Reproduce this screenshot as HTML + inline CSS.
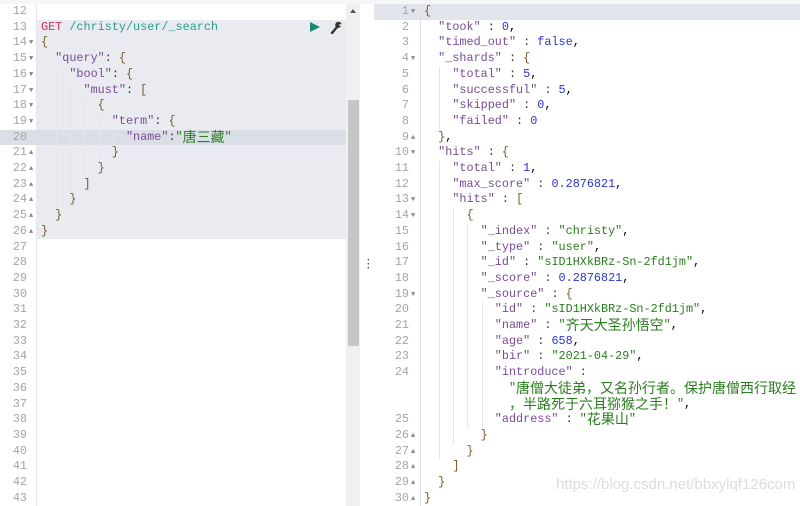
<!DOCTYPE html>
<html><head><meta charset="utf-8"><style>
body{margin:0;width:800px;height:506px;overflow:hidden;background:#fff;font-family:"Liberation Mono","Noto Sans CJK SC",monospace;font-size:11.8px;position:relative}
.top{position:absolute;left:0;top:0;width:800px;height:4px;background:#f5f6f8}
.l{position:absolute;height:15.7px;line-height:15.7px;white-space:pre;overflow:visible}
.n{position:absolute;height:15.7px;line-height:15.7px;text-align:right;color:#a4a4aa}
.a{font-size:7px;color:#888;position:absolute}
.k{color:#7a4a96}.s{color:#2a7d1e}.m{color:#2a36c8}.p{color:#333}.b{color:#7a5a2a}
.cj{font-family:"Noto Sans CJK SC",sans-serif;font-size:14px;line-height:10px;vertical-align:top;display:inline-block;height:15.7px;line-height:15.7px}
.g{position:absolute;width:1px;background:#e6e6e6}
</style></head><body>
<div class="top"></div>
<div style="position:absolute;left:36px;top:4px;width:1px;height:502px;background:#e4e6ea"></div>
<div style="position:absolute;left:37px;top:19.7px;width:309px;height:219.8px;background:#e9ebf1"></div>
<div style="position:absolute;left:0;top:129.6px;width:346px;height:15.7px;background:#dadee6"></div>
<div style="position:absolute;left:346px;top:4px;width:14px;height:502px;background:#f0f0f0"></div>
<div style="position:absolute;left:348px;top:100px;width:11px;height:246px;background:#c6c6c6"></div>
<div style="position:absolute;left:350px;top:9px;width:0;height:0;border-left:3.5px solid transparent;border-right:3.5px solid transparent;border-bottom:4px solid #555"></div>
<div style="position:absolute;left:310px;top:22px;width:0;height:0;border-top:5.5px solid transparent;border-bottom:5.5px solid transparent;border-left:10px solid #178a72"></div>
<svg style="position:absolute;left:330px;top:21px" width="13" height="13" viewBox="0 0 13 13"><path d="M2 12 L7 6" stroke="#333" stroke-width="2.4" stroke-linecap="round"/><path d="M6 6 A3.2 3.2 0 1 1 11.5 3 L9 3.5 L9 4.5 L11 5 A3.2 3.2 0 0 1 6 6Z" fill="#333"/></svg>
<div id="left"></div>
<div style="position:absolute;left:365px;top:259px;color:#555;font-size:11px;line-height:4px">·<br>·<br>·</div>
<div style="position:absolute;left:374px;top:4px;width:426px;height:15.7px;background:#e2e5ec"></div>
<div style="position:absolute;left:420px;top:4px;width:1px;height:502px;background:#e0e2e8"></div>
<div id="right"></div>
<div style="position:absolute;left:556px;top:476px;color:#dcdcdc;font-family:'Liberation Sans',sans-serif;font-size:15px">https://blog.csdn.net/bbxylqf126com</div>
<script>
const H=15.7,T=4,CW=7.08;
function row(el,i,num,arrow,html,nx,cx,nw){
 let y=T+i*H;
 let s='';
 if(num!==null) s+=`<div class="n" style="left:${nx}px;width:${nw}px;top:${y}px">${num}</div>`;
 if(arrow) s+=`<div class="a" style="left:${nx+nw+2}px;top:${y+4}px">${arrow}</div>`;
 s+=`<div class="l" style="left:${cx}px;top:${y}px">${html}</div>`;
 el.insertAdjacentHTML('beforeend',s);
}
function guide(el,cx,col,r0,r1){el.insertAdjacentHTML('afterbegin',`<div class="g" style="left:${Math.round(cx+col*CW)+1}px;top:${T+r0*H}px;height:${(r1-r0+1)*H}px"></div>`);}
const D='▼',U='▲';
const q=t=>`<span class="k">"${t}"</span>`;
const L=[
[12,'',''],
[13,'','<span style="color:#d0325e">GET</span> <span style="color:#2a9d8a">/christy/user/_search</span>'],
[14,D,'<span class="b">{</span>'],
[15,D,'  '+q('query')+'<span class="p">: </span><span class="b">{</span>'],
[16,D,'    '+q('bool')+'<span class="p">: </span><span class="b">{</span>'],
[17,D,'      '+q('must')+'<span class="p">: </span><span class="b">[</span>'],
[18,D,'        <span class="b">{</span>'],
[19,D,'          '+q('term')+'<span class="p">: </span><span class="b">{</span>'],
[20,'','            '+q('name')+'<span class="p">:</span><span class="s">"<span class="cj">唐三藏</span>"</span>'],
[21,U,'          <span class="b">}</span>'],
[22,U,'        <span class="b">}</span>'],
[23,U,'      <span class="b">]</span>'],
[24,U,'    <span class="b">}</span>'],
[25,U,'  <span class="b">}</span>'],
[26,U,'<span class="b">}</span>']];
const le=document.getElementById('left');
for(let i=0;i<32;i++){let r=L[i]||[12+i,'',''];row(le,i,r[0],r[1],r[2],0,41,27);}
guide(le,41,2,4,12);guide(le,41,4,5,11);guide(le,41,6,6,10);guide(le,41,8,7,9);guide(le,41,10,8,8);
const v=t=>`<span class="s">"${t}"</span>`, c=t=>`<span class="s">"<span class="cj">${t}</span>"</span>`, m=t=>`<span class="m">${t}</span>`, P='<span class="p"> : </span>';
const R=[
[1,D,'<span class="b">{</span>'],
[2,'','  '+q('took')+P+m('0')+','],
[3,'','  '+q('timed_out')+P+m('false')+','],
[4,D,'  '+q('_shards')+P+'<span class="b">{</span>'],
[5,'','    '+q('total')+P+m('5')+','],
[6,'','    '+q('successful')+P+m('5')+','],
[7,'','    '+q('skipped')+P+m('0')+','],
[8,'','    '+q('failed')+P+m('0')],
[9,U,'  <span class="b">}</span>,'],
[10,D,'  '+q('hits')+P+'<span class="b">{</span>'],
[11,'','    '+q('total')+P+m('1')+','],
[12,'','    '+q('max_score')+P+m('0.2876821')+','],
[13,D,'    '+q('hits')+P+'<span class="b">[</span>'],
[14,D,'      <span class="b">{</span>'],
[15,'','        '+q('_index')+P+v('christy')+','],
[16,'','        '+q('_type')+P+v('user')+','],
[17,'','        '+q('_id')+P+v('sID1HXkBRz-Sn-2fd1jm')+','],
[18,'','        '+q('_score')+P+m('0.2876821')+','],
[19,D,'        '+q('_source')+P+'<span class="b">{</span>'],
[20,'','          '+q('id')+P+v('sID1HXkBRz-Sn-2fd1jm')+','],
[21,'','          '+q('name')+P+c('齐天大圣孙悟空')+','],
[22,'','          '+q('age')+P+m('658')+','],
[23,'','          '+q('bir')+P+v('2021-04-29')+','],
[24,'','          '+q('introduce')+'<span class="p"> :</span>'],
[null,'','            <span class="s">"<span class="cj">唐僧大徒弟，又名孙行者。保护唐僧西行取经</span></span>'],
[null,'','            <span class="s"><span class="cj">，半路死于六耳猕猴之手！</span>"</span>,'],
[25,'','          '+q('address')+P+c('花果山')],
[26,U,'        <span class="b">}</span>'],
[27,U,'      <span class="b">}</span>'],
[28,U,'    <span class="b">]</span>'],
[29,U,'  <span class="b">}</span>'],
[30,U,'<span class="b">}</span>']];
const re=document.getElementById('right');
R.forEach((r,i)=>row(re,i,r[0],r[1],r[2],380,424,29));
guide(re,424,2,4,7);guide(re,424,2,10,28);guide(re,424,4,13,29-2);guide(re,424,6,14,28-2);guide(re,424,8,19,26);
</script>
</body></html>
